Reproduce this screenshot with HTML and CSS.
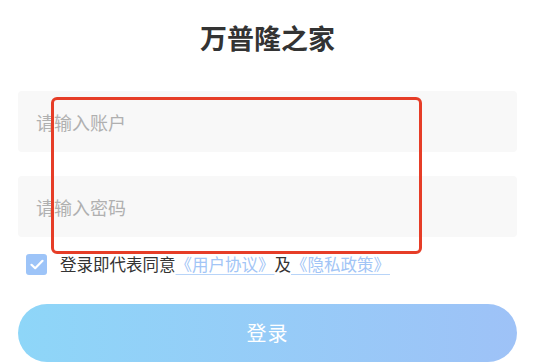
FILE: index.html
```html
<!DOCTYPE html>
<html lang="zh-CN">

<head>
    <meta charset="UTF-8">
    <meta name="viewport" content="width=device-width, initial-scale=1.0">
    <title>万普隆之家</title>
    <link rel="stylesheet" href="styles.css">
</head>

<body>
    <div class="page">
        <div class="title">万普隆之家</div>

        <div class="field">
            <input type="text" placeholder="请输入账户">
        </div>
        <div class="field">
            <input type="password" placeholder="请输入密码">
        </div>

        <div class="agree">
            <span class="check">
                <svg width="14" height="11" viewBox="0 0 14 11">
                    <polyline points="1.5,5.8 5.2,9.2 12.5,1.8" fill="none" stroke="#fff" stroke-width="2.2" stroke-linecap="round" stroke-linejoin="round" />
                </svg>
            </span>
            <span class="agree-text">登录即代表同意<a href="#">《用户协议》</a>及<a href="#">《隐私政策》</a></span>
        </div>

        <button class="login-btn">登录</button>

        <div class="highlight"></div>
    </div>
</body>

</html>
```

FILE: styles.css
```css
* {
    margin: 0;
    padding: 0;
    box-sizing: border-box;
}

body {
    font-family: "Noto Sans CJK SC", "Noto Sans", sans-serif;
    background: #fff;
    color: #333;
    overflow: hidden;
}

.page {
    position: relative;
    padding: 20px 18px 0;
}

.title {
    font-size: 27px;
    line-height: 36px;
    font-weight: bold;
    text-align: center;
    color: #333;
    margin-bottom: 35px;
}

.field {
    height: 61px;
    background: #f8f8f8;
    border-radius: 4px;
    padding: 0 18px;
    display: flex;
    align-items: center;
    margin-bottom: 24px;
}

.field input {
    width: 100%;
    border: none;
    outline: none;
    background: transparent;
    font-family: inherit;
    font-size: 18px;
    color: #333;
}

.field input::placeholder {
    color: #b0b0b0;
}

.agree {
    display: flex;
    align-items: center;
    margin-top: -8px;
    padding-left: 8px;
    height: 22px;
}

.check {
    width: 21px;
    height: 21px;
    border-radius: 3px;
    background: #9dc4f8;
    display: flex;
    justify-content: center;
    align-items: center;
    margin-right: 13px;
}

.agree-text {
    font-size: 16.5px;
    line-height: 22px;
    color: #333;
}

.agree-text a {
    color: #a2c5f6;
    text-decoration: underline;
    text-decoration-color: #b8d4f8;
    text-underline-offset: 3px;
}

.login-btn {
    display: block;
    width: 100%;
    height: 58px;
    margin-top: 29px;
    border: none;
    border-radius: 29px;
    background: linear-gradient(90deg, #8ed6f8, #9ec2f7);
    color: #fff;
    font-family: inherit;
    font-size: 20px;
    line-height: 52px;
    letter-spacing: 1px;
}

/* markering ovanpå fälten */
.highlight {
    position: absolute;
    left: 51px;
    top: 97px;
    width: 371px;
    height: 157px;
    border: 3.5px solid #e63d27;
    border-radius: 6px;
    pointer-events: none;
}
```
